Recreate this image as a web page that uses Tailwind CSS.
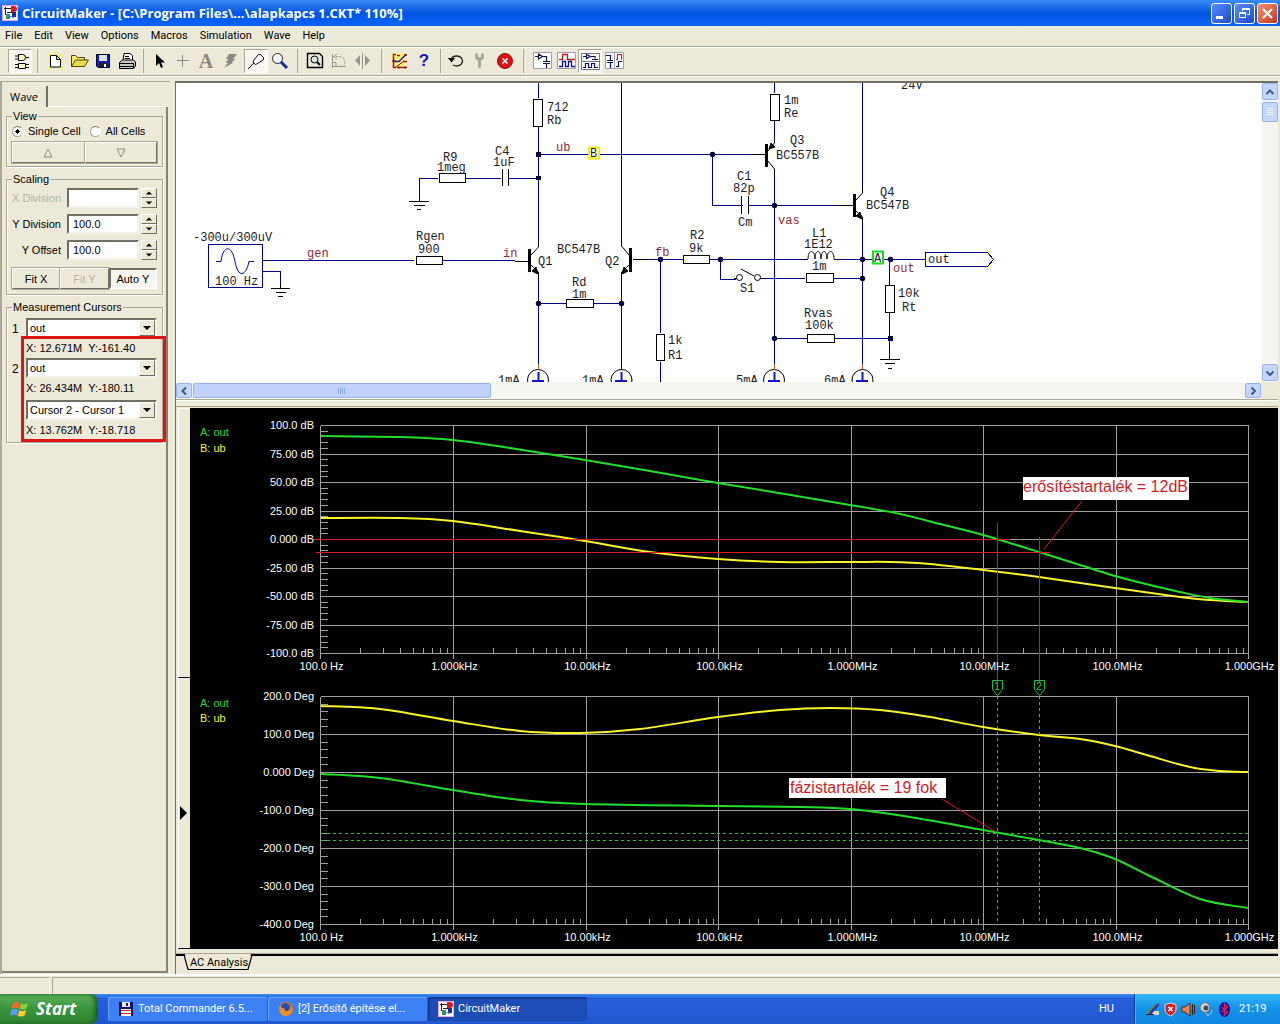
<!DOCTYPE html>
<html lang="hu">
<head>
<meta charset="utf-8">
<title>CircuitMaker - [C:\Program Files\...\alapkapcs 1.CKT* 110%]</title>
<script src="https://cdn.jsdelivr.net/npm/@tailwindcss/browser@4"></script>
</head>
<body class="flex min-h-screen flex-col overflow-x-hidden bg-[#ece9d8] font-['Liberation_Sans',Arial,sans-serif] text-[11px] leading-[14px] text-black">

<!-- shared symbols -->
<svg width="0" height="0" class="hidden">
  <symbol id="app" viewBox="0 0 16 16">
    <rect width="16" height="16" fill="#f3a6dc"/><rect x="1" y="1" width="14" height="14" fill="#fff"/>
    <path d="M2 3.500h8M3.500 2v8M5 7.500h6" stroke="#222" fill="none"/>
    <path d="M9 1h3a3 3 0 0 1 0 6H9z" fill="#d81a28"/>
    <path d="M10 7h4v5h-4z" fill="#222c8c"/>
    <path d="M4 9h4v5H4z" fill="#2fa060"/><path d="M5 14c2-3 5-3 7-1" stroke="#3858c8" fill="none"/>
  </symbol>
</svg>

<header class="flex h-[26px] items-center bg-linear-to-b from-[#3a8cf8] via-[#0454e2] to-[#0a64fa] pr-0.5 pl-0.5">
  <svg class="size-4 shrink-0"><use href="#app"/></svg>
  <h1 class="ml-1 flex-1 truncate font-['Open_Sans','Noto_Sans',sans-serif] text-[13px] leading-5 font-bold text-white">CircuitMaker - [C:\Program Files\...\alapkapcs 1.CKT* 110%]</h1>
  <div class="flex gap-0.5">
    <button aria-label="Minimize" class="size-[21px] rounded-[3px] border border-white bg-linear-to-br from-[#5b8cf4] to-[#1a48d0]"><svg viewBox="0 0 19 19"><path d="M4 12h7v3H4z" fill="#fff"/></svg></button>
    <button aria-label="Restore" class="size-[21px] rounded-[3px] border border-white bg-linear-to-br from-[#5b8cf4] to-[#1a48d0]"><svg viewBox="0 0 19 19" fill="none" stroke="#fff"><path d="M7.500 7V4.500h7v6H12M7 5.500h8M4.500 8.500h6v5h-6zM4 9.500h7"/></svg></button>
    <button aria-label="Close" class="size-[21px] rounded-[3px] border border-white bg-linear-to-br from-[#f09070] to-[#c83010]"><svg viewBox="0 0 19 19"><path d="M5 5l9 9M14 5l-9 9" stroke="#fff" stroke-width="2.200"/></svg></button>
  </div>
</header>

<nav class="flex h-5 items-center gap-3 pl-[5px] font-['Roboto',sans-serif] text-[11px]">
  <a href="#">File</a><a href="#">Edit</a><a href="#">View</a><a href="#">Options</a><a href="#">Macros</a><a href="#">Simulation</a><a href="#">Wave</a><a href="#">Help</a>
</nav>

<div class="flex h-[30px] items-center border-y border-[#aca899] pl-2 shadow-[inset_0_1px_0_#fff,0_1px_0_#fff]">
  <button aria-label="Parts" class="size-6 border border-[#aca899] border-r-white border-b-white bg-[#f6f5ee]"><svg viewBox="1 1 22 22" fill="#ffffb4" stroke="#000"><path d="M10.500 5.500h4a3 3 0 0 1 0 6h-4zM7 7h3M7 10h3M18 8.500h3"/><path d="M10.500 14.500h7v5h-7zM7 15.500h3M7 18.500h3M18 15.500h3M18 18.500h3"/></svg></button>
  <span class="mx-[5px] h-6 w-px bg-[#aca899]"></span>
  <button aria-label="New" class="size-6"><svg viewBox="0 0 24 24"><path d="M5 5l3 2M19 5l-3 3M4 12h4M20 12h-3M5 20l3-2M20 20l-3-3M12 3v3" stroke="#f4f430" stroke-width="2"/><path d="M7.500 6.500h6l4 4v7.500h-10zM13.500 6.500v4h4" fill="#fff" stroke="#000"/></svg></button>
  <button aria-label="Open" class="size-6"><svg viewBox="0 0 24 24" stroke="#4c4a00"><path d="M4.500 17.500v-11h4l2 2h7v3" fill="#f4ec60"/><path d="M4.500 17.500l4-6.500h13l-4 6.500z" fill="#e8dc50"/></svg></button>
  <button aria-label="Save" class="size-6"><svg viewBox="0 0 24 24"><path d="M5.500 5.500h13v13H7l-1.500-1.500z" fill="#1420b0" stroke="#000040"/><path d="M8 6h8v6H8z" fill="#d8e4f4"/><path d="M8 14h8v4H8z" fill="#222"/><path d="M13 15h2v3h-2z" fill="#fff"/></svg></button>
  <button aria-label="Print" class="size-6"><svg viewBox="0 0 24 24" stroke="#000"><path d="M8 11.500l1-7h6l2.500 2v5" fill="#fff"/><path d="M10 7.500h4M10 9.500h5"/><path d="M4.500 13.500l3-2.500h11l2 2v4l-2 2.500h-14z" fill="#c8c8c0"/><path d="M5 14.500h13M5 17.500h13M18.500 14v5"/></svg></button>
  <span class="mx-1 h-6 w-px bg-[#aca899]"></span>
  <button aria-label="Select" class="size-6"><svg viewBox="0 0 24 24"><path d="M8 5v12l3-3 2 5 2-1-2-4.500h4z"/></svg></button>
  <button aria-label="Wire" class="size-6"><svg viewBox="0 0 24 24"><path d="M5 11.500h12M10.500 6v12" stroke="#908e84"/></svg></button>
  <button aria-label="Text" class="size-6 pr-1 font-['Liberation_Serif',serif] text-xl leading-6 font-bold text-[#8c8a80]">A</button>
  <button aria-label="Delete" class="size-6"><svg viewBox="0 0 24 24"><path d="M9 5h8l-4 5h2.500l-4 3.500h2L4 19l4-5.500H5.500L8.500 10H6z" fill="#8c8a80"/></svg></button>
  <button aria-label="Probe" class="size-6 border border-[#aca899] border-r-white border-b-white bg-[#f6f5ee]"><svg viewBox="1 1 22 22" fill="#fff" stroke="#000"><path d="M4 20l6-6"/><path d="M9.500 11.500l5-6 2 0 3 3v2l-6 4-2 1-2.500-2z"/></svg></button>
  <button aria-label="Zoom" class="size-6"><svg viewBox="0 0 24 24"><circle cx="9.500" cy="9.500" r="5" fill="#f4f8ff" stroke="#222"/><path d="M13 13l6 6" stroke="#1828b0" stroke-width="3"/></svg></button>
  <span class="mx-[5px] h-6 w-px bg-[#aca899]"></span>
  <button aria-label="Fit" class="size-6"><svg viewBox="0 0 24 24" fill="none" stroke="#000"><path d="M4.500 4.500h12l3 3v11h-15z" stroke-width="1.400"/><circle cx="11.500" cy="10.500" r="3.500" fill="#cfe8e8"/><path d="M14 13l3 3" stroke-width="2"/></svg></button>
  <button aria-label="Rotate" class="size-6"><svg viewBox="0 0 24 24" fill="none" stroke="#98968c"><path d="M5.500 5v14M5 17.500h14" /><path d="M6 7.500h6a6 6 0 0 1 5 9" stroke-dasharray="2 1"/><path d="M10 5l-3 2.500 3 2.500M5 13.500h4v4"/></svg></button>
  <button aria-label="Mirror" class="size-6"><svg viewBox="0 0 24 24" fill="#98968c"><path d="M9 6v11l-5-5.500zM14 6v11l5-5.500z"/><path d="M11 4h1v16h-1z"/></svg></button>
  <span class="mx-1.5 h-6 w-px bg-[#aca899]"></span>
  <button aria-label="Run" class="size-6"><svg viewBox="0 0 24 24" fill="none"><path d="M4 4h14v15H5z" fill="#fff27a"/><path d="M8 5.500H5.500v13H8M4 12h4M9 6.500h3M15 12.500h4M9 18.500h10" stroke="#a01818" stroke-width="1.500"/><path d="M6 12.500h5l7-7" stroke="#2020a0" stroke-width="1.500"/><path d="M8 18l8-6M16.500 5.500h2v1h-2zM10.500 18h1v1h-1zM16.500 18h1v1h-1z" stroke="#801010"/></svg></button>
  <button aria-label="Help" class="size-6 text-[17px] leading-6 font-bold text-[#1414c0]">?</button>
  <span class="mx-1 h-6 w-px bg-[#aca899]"></span>
  <button aria-label="Reset" class="size-6"><svg viewBox="0 0 24 24"><path d="M6 10a6 5 0 1 1 2 6" fill="none" stroke="#222" stroke-width="1.400"/><path d="M3 9h7l-3.500 4.500z"/></svg></button>
  <button aria-label="Tools" class="size-6"><svg viewBox="0 0 24 24"><path d="M6 5v4l3 3v6l1.500 1.500L12 18v-6l3-3V5l-3-1v4h-3V4z" fill="#aaa89c"/></svg></button>
  <button aria-label="Stop" class="size-6"><svg viewBox="0 0 24 24"><circle cx="12" cy="12" r="7.500" fill="#e01010" stroke="#901010"/><path d="M9.500 9.500l5 5M14.500 9.500l-5 5" stroke="#fff" stroke-width="1.600"/></svg></button>
  <span class="mx-1.5 h-6 w-px bg-[#aca899]"></span>
  <button aria-label="Schematic" class="size-6"><svg viewBox="0 0 24 24" fill="none" stroke="#101040"><path d="M3.500 3.500h18v16h-18z" fill="#fff" stroke="#98a0b0"/><path d="M5 7.500h3M8.500 5l4 2.500-4 2.500zM13 7.500h3.500v5M13 12.500h7M13 14.500h7M16.500 15v4" stroke-width="1.200"/></svg></button>
  <button aria-label="Waveforms" class="size-6"><svg viewBox="0 0 24 24" fill="none"><path d="M3.500 3.500h18v16h-18z" fill="#fff" stroke="#98a0b0"/><path d="M5 10.500h3.500v-5h5v5H21" stroke="#c01818" stroke-width="1.300"/><path d="M5 17.500h3.500v-5h3v5h3v-5h3v5H21" stroke="#101090" stroke-width="1.300"/></svg></button>
  <button aria-label="Split horizontally" class="size-6 border border-[#aca899] border-r-white border-b-white bg-[#f6f5ee]"><svg viewBox="1 1 22 22" fill="none" stroke="#101060"><path d="M3.500 4.500h18v16h-18z" fill="#fff" stroke="#707880"/><path d="M3 12.500h18" stroke="#707880"/><path d="M5 7.500h3M8.500 5.500l4 2-4 2zM13 7.500h4v2M14 10.500h6M5 18.500h2.500v-4h3v4h3v-4h3v4H20" stroke-width="1.200"/></svg></button>
  <button aria-label="Split vertically" class="size-6"><svg viewBox="0 0 24 24" fill="none" stroke="#101060"><path d="M3.500 3.500h18v16h-18z" fill="#fff" stroke="#98a0b0"/><path d="M12.500 3v17" stroke="#98a0b0"/><path d="M4 6.500h4.500v5M5 11.500h6M5 13.500h6M8.500 14v5M14 17.500h2.500v-5H20" stroke-width="1.200"/><path d="M14 10.500h1.500v-5h4v5" stroke="#c01818" stroke-width="1.200"/></svg></button>
</div>

<main class="flex flex-1 items-stretch pt-[5px]">
  <!-- side panel -->
  <aside class="w-[170px] shrink-0 border-t border-l-2 border-[#aca899] pt-1 pb-px">
    <div class="flex h-full flex-col">
      <div class="flex">
        <button class="h-[21px] w-[46px] border-r-2 border-r-[#716f64] font-['Open_Sans',sans-serif] text-[11px] leading-3">Wave</button>
        <span class="mr-0.5 flex-1 border-b border-white"></span>
      </div>
      <div class="mr-0.5 flex flex-1 flex-col gap-[5px] border-r-2 border-b-2 border-[#848278] pr-[3px] pl-1">
        <fieldset class="mt-0.5 h-[58px] border border-[#aca899] px-[5px] shadow-[inset_1px_0_0_#fff,1px_1px_0_#fff]">
          <legend class="px-px">View</legend>
          <div class="flex h-4 items-center gap-[5px]">
            <input id="r1" name="cells" type="radio" checked class="size-[11px] appearance-none rounded-full border border-[#aca899] border-t-[#716f64] border-r-white bg-white bg-radial from-black from-30% to-white to-35%"><label for="r1" class="mr-1">Single Cell</label>
            <input id="r2" name="cells" type="radio" class="size-[11px] appearance-none rounded-full border border-[#aca899] border-t-[#716f64] border-r-white bg-white"><label for="r2">All Cells</label>
          </div>
          <div class="mt-[3px] grid h-[21px] grid-cols-2">
            <button aria-label="Up" class="flex items-center justify-center border border-white border-r-[#716f64] border-b-[#716f64] outline outline-[#aca899]"><svg class="size-3" viewBox="0 0 12 12"><path d="M6 2l4 8H2z" fill="none" stroke="#8c8a80"/></svg></button>
            <button aria-label="Down" class="flex items-center justify-center border border-white border-r-[#716f64] border-b-[#716f64] outline outline-[#aca899]"><svg class="size-3" viewBox="0 0 12 12"><path d="M6 10l4-8H2z" fill="none" stroke="#8c8a80"/></svg></button>
          </div>
        </fieldset>
        <fieldset class="h-[123px] border border-[#aca899] px-[5px] shadow-[inset_1px_0_0_#fff,1px_1px_0_#fff]">
          <legend class="px-px">Scaling</legend>
          <div class="mt-0.5 grid grid-cols-[1fr_72px_16px] items-center gap-x-0.5 gap-y-1.5">
            <label for="xd" class="pr-1 text-right whitespace-nowrap text-[#b4b1a2]">X Division</label>
            <input id="xd" class="h-5 w-full border-2 border-[#716f64] border-r-[#f4f2e8] border-b-[#f4f2e8] bg-white px-1">
            <div class="spin grid h-5"></div>
            <label for="yd" class="pr-1 text-right whitespace-nowrap">Y Division</label>
            <input id="yd" value="100.0" class="h-5 w-full border-2 border-[#716f64] border-r-[#f4f2e8] border-b-[#f4f2e8] bg-white px-1">
            <div class="spin grid h-5"></div>
            <label for="yo" class="pr-1 text-right whitespace-nowrap">Y Offset</label>
            <input id="yo" value="100.0" class="h-5 w-full border-2 border-[#716f64] border-r-[#f4f2e8] border-b-[#f4f2e8] bg-white px-1">
            <div class="spin grid h-5"></div>
          </div>
          <div class="mt-2 grid h-[21px] grid-cols-3">
            <button class="border border-white border-r-[#716f64] border-b-[#716f64] outline outline-[#aca899]">Fit X</button>
            <button disabled class="border border-white border-r-[#716f64] border-b-[#716f64] text-[#b4b1a2] outline outline-[#aca899]">Fit Y</button>
            <button class="border-2 border-[#716f64] border-r-white border-b-white bg-[#f6f5ee] whitespace-nowrap">Auto Y</button>
          </div>
        </fieldset>
        <fieldset class="relative h-[143px] border border-[#aca899] px-[5px] shadow-[inset_1px_0_0_#fff,1px_1px_0_#fff]">
          <legend class="px-px">Measurement Cursors</legend>
          <div class="mt-1 grid grid-cols-[12px_1fr] gap-x-0.5">
            <label for="c1" class="pt-1 text-[12px]">1</label>
            <div class="pick grid h-5"><select id="c1" class="col-start-1 row-start-1 h-5 w-full appearance-none border-2 border-[#716f64] border-r-[#f4f2e8] border-b-[#f4f2e8] bg-white px-0.5"><option>out</option></select></div>
            <p class="col-start-2 h-5 pt-[3px] whitespace-pre">X: 12.671M  Y:-161.40</p>
            <label for="c2" class="pt-1 text-[12px]">2</label>
            <div class="pick grid h-5"><select id="c2" class="col-start-1 row-start-1 h-5 w-full appearance-none border-2 border-[#716f64] border-r-[#f4f2e8] border-b-[#f4f2e8] bg-white px-0.5"><option>out</option></select></div>
            <p class="col-start-2 h-[22px] pt-[3px] whitespace-pre">X: 26.434M  Y:-180.11</p>
            <div class="pick col-start-2 grid h-5"><select aria-label="Difference" class="col-start-1 row-start-1 h-5 w-full appearance-none border-2 border-[#716f64] border-r-[#f4f2e8] border-b-[#f4f2e8] bg-white px-0.5"><option>Cursor 2 - Cursor 1</option></select></div>
            <p class="col-start-2 h-5 pt-[3px] whitespace-pre">X: 13.762M  Y:-18.718</p>
          </div>
          <div class="pointer-events-none absolute top-5.5 -right-1 -bottom-0.5 left-3.5 border-3 border-[#e01414]"></div>
        </fieldset>
      </div>
    </div>
  </aside>

  <div class="ml-[5px] flex min-w-0 flex-1 flex-col border-l border-[#716f64] pr-0.5">
    <!-- schematic pane -->
    <section class="grid grid-cols-[1fr_17px] grid-rows-[299px_17px] border-t-2 border-[#716f64] bg-white">
      <svg class="h-[299px] w-full" id="schem" viewBox="176 83 1085 299" preserveAspectRatio="xMinYMin meet" font-family="'Liberation Mono','Courier New',monospace" font-size="12" fill="none" stroke="#00008c">
        <g shape-rendering="crispEdges">
          <!-- wires -->
          <path d="M538.500 83v15M538.500 127v114M538.500 275v95M621.500 83v161M621.500 275v95M538 154.500h215M712.500 154v51h30M749 205.500h103M774.500 83v10M774.500 121v20M774.500 170v200M862.500 83v110M862.500 222v148M419.500 201v-22.500h18M466 178.500h35M509 178.500h29M262 260.500h152M443 260.500h72M262 271.500h18v14M538 303.500h28M594 303.500h28M633 259.500h50M710 259.500h95M660.500 260v73M660.500 362v20M720.500 260v19h15M760 278.500h45M834 278.500h28M834 259.500h91M774 338.500h33M835 338.500h55M889.500 260v25M889.500 313v44"/>
          <path d="M208.500 244.500h54v43h-54zM925.500 252.500h62l6 7-6 7h-62z"/>
          <!-- component bodies -->
          <g stroke="#000" fill="#fff">
            <path d="M533.500 99.500h9v27h-9zM770.500 94.500h9v26h-9zM439.500 173.500h26v9h-26zM416.500 256.500h26v8h-26zM566.500 299.500h27v8h-27zM683.500 255.500h26v8h-26zM656.500 334.500h8v26h-8zM806.500 273.500h27v9h-27zM807.500 334.500h27v8h-27zM885.500 285.500h9v27h-9z"/>
            <path fill="none" d="M409 201.500h20M414 205.500h11M417 209.500h4M271 288.500h19M276 292.500h10M278 296.500h5M880 359.500h20M885 363.500h10M888 368.500h4M502.500 169v17M508.500 169v17M741.500 196v18M748.500 196v18M515 261.500h13M633 259.500h14M752 154.500h13M838 205.500h15M805 259.500h3M834 259.500h4M734 278.500h4M889.500 357v2M280.500 284v5"/>
          </g>
          <path d="M528 249h3v23h-3zM629 248h3v24h-3zM765 144h3v23h-3zM853 194h3v23h-3z" fill="#000" stroke="none"/>
        </g>
        <g stroke="#000">
          <path d="M531 255l7.500-8v-6M531 265l7.500 7v7M629 255l-7.500-9v-5M629 265l-7.500 7v7M768 151l6.500-8v-6M768 161l6.500 8v6M856 200l6.500-7v-5M856 211l6.500 6v7"/>
          <path d="M538 274l-6-3 4-4zM622 274l6-3-4-4zM769 149l6-2-4-4zM862 219l-6-3 4-4z" fill="#000"/>
          <path d="M808 259c0-10 7-10 7 0 0-10 6-10 6 0 0-10 6-10 6 0 0-10 7-10 7 0"/>
          <circle cx="739.500" cy="277.500" r="3" fill="#fff"/><circle cx="757.500" cy="277.500" r="3" fill="#fff"/><path d="M741 269l13 7"/>
          <circle cx="538" cy="380" r="10.500"/><circle cx="621.500" cy="380" r="10.500"/><circle cx="774" cy="380" r="10.500"/><circle cx="862.500" cy="380" r="10.500"/>
        </g>
        <path d="M216 261.500h5c2-17 11-17 14 0s11 15 14 0h5"/>
        <path d="M538.500 372v9M532 381h12M621.500 372v9M615 381h12M774.500 372v9M768 381h12M862.500 372v9M856 381h12" stroke="#1414d0" stroke-width="2"/>
        <path d="M538.500 364v6M774.500 364v6M862.500 364v6" stroke="#b06030"/>
        <g fill="#00003c" stroke="none">
          <path d="M536 152h5v5h-5zM536 176h5v4h-5zM888 336h5v5h-5z"/>
          <circle cx="538.500" cy="303.500" r="2.700"/><circle cx="621.500" cy="303.500" r="2.700"/><circle cx="712.500" cy="154.500" r="2.700"/><circle cx="774.500" cy="205.500" r="2.700"/><circle cx="660.500" cy="259.500" r="2.700"/><circle cx="720.500" cy="259.500" r="2.700"/><circle cx="774.500" cy="338.500" r="2.700"/><circle cx="862.500" cy="259.500" r="2.700"/><circle cx="862.500" cy="278.500" r="2.700"/><circle cx="890.500" cy="259.500" r="2.700"/>
        </g>
        <path d="M589 147.500h10v11h-10z" fill="#fff" stroke="#f4ec10" stroke-width="2"/>
        <path d="M873 251.500h10v12h-10z" fill="#fff" stroke="#10e020" stroke-width="2"/>
        <g fill="#1c1c24" stroke="none">
          <text x="547" y="111">712</text><text x="547" y="124">Rb</text><text x="590" y="157">B</text><text x="874" y="262">A</text>
          <text x="443" y="161">R9</text><text x="437" y="171">1meg</text><text x="495" y="155">C4</text><text x="493" y="166">1uF</text>
          <text x="193" y="241">-300u/300uV</text><text x="215" y="285">100 Hz</text>
          <text x="416" y="240">Rgen</text><text x="418" y="253">900</text><text x="538" y="265">Q1</text><text x="557" y="253">BC547B</text><text x="605" y="265">Q2</text>
          <text x="572" y="286">Rd</text><text x="572" y="298">1m</text><text x="690" y="239">R2</text><text x="689" y="252">9k</text>
          <text x="668" y="344">1k</text><text x="668" y="359">R1</text><text x="737" y="180">C1</text><text x="733" y="192">82p</text><text x="738" y="226">Cm</text>
          <text x="740" y="292">S1</text><text x="784" y="104">1m</text><text x="784" y="117">Re</text><text x="790" y="144">Q3</text><text x="776" y="159">BC557B</text>
          <text x="880" y="196">Q4</text><text x="866" y="209">BC547B</text><text x="812" y="237">L1</text><text x="804" y="248">1E12</text><text x="812" y="270">1m</text>
          <text x="804" y="317">Rvas</text><text x="805" y="329">100k</text><text x="898" y="297">10k</text><text x="902" y="311">Rt</text><text x="928" y="263">out</text>
          <text x="901" y="89">24V</text><text x="498" y="384">1mA</text><text x="582" y="384">1mA</text><text x="736" y="384">5mA</text><text x="824" y="384">6mA</text>
        </g>
        <g fill="#902838" stroke="none">
          <text x="556" y="151">ub</text><text x="307" y="257">gen</text><text x="503" y="257">in</text><text x="655" y="256">fb</text><text x="778" y="224">vas</text><text x="893" y="272">out</text>
        </g>
      </svg>
      <div class="flex flex-col bg-[#f6f5ef] pb-px pl-px">
        <button aria-label="Scroll up" class="h-[17px] rounded-xs border border-[#98b4ea] bg-[#c4d6fc]"><svg viewBox="0 0 14 14"><path d="M3.500 9L7 5.500 10.500 9" fill="none" stroke="#40588c" stroke-width="2"/></svg></button>
        <div class="mt-0.5 flex h-5 items-center justify-center rounded-xs border border-[#98b4ea] bg-[#c4d6fc]"><svg class="size-2" viewBox="0 0 8 8"><path d="M1 .5h6M1 2.500h6M1 4.500h6M1 6.500h6" stroke="#eef4fe"/></svg></div>
        <span class="flex-1"></span>
        <button aria-label="Scroll down" class="h-[17px] rounded-xs border border-[#98b4ea] bg-[#c4d6fc]"><svg viewBox="0 0 14 14"><path d="M3.500 5.500L7 9l3.500-3.500" fill="none" stroke="#40588c" stroke-width="2"/></svg></button>
      </div>
      <div class="flex bg-[#f6f5ef] py-px">
        <button aria-label="Scroll left" class="w-4 rounded-xs border border-[#98b4ea] bg-[#c4d6fc]"><svg viewBox="0 0 14 14"><path d="M9 3.500L5.500 7 9 10.500" fill="none" stroke="#40588c" stroke-width="2"/></svg></button>
        <div class="ml-px flex w-[298px] items-center justify-center rounded-xs border border-[#98b4ea] bg-[#c0d2fc]"><svg class="size-2" viewBox="0 0 8 8"><path d="M.5 1v6M2.500 1v6M4.500 1v6M6.500 1v6" stroke="#8ca8e0"/></svg></div>
        <span class="flex-1"></span>
        <button aria-label="Scroll right" class="w-4 rounded-xs border border-[#98b4ea] bg-[#c4d6fc]"><svg viewBox="0 0 14 14"><path d="M5.500 3.500L9 7l-3.500 3.500" fill="none" stroke="#40588c" stroke-width="2"/></svg></button>
      </div>
      <div class="bg-[#ece9d8]"></div>
    </section>
    <div class="h-[9px] border-t border-[#aca899] bg-[#ece9d8] pt-1.5 shadow-[inset_0_1px_0_#fff]"><div class="border-t border-[#aca899]"></div></div>

    <!-- waveform pane -->
    <section class="flex">
      <div class="flex w-3.5 shrink-0 flex-col pl-0.5">
        <div class="h-[270px] border-t border-l border-white border-b border-b-black"></div>
        <div class="flex flex-1 items-center border-b border-l border-b-black border-l-white"><svg class="h-4 w-2.5" viewBox="0 0 10 16"><path d="M1 1v14l7-7z"/></svg></div>
      </div>
      <svg class="h-[541px] w-full min-w-0 bg-black" viewBox="190 408 1088 541" preserveAspectRatio="xMinYMin meet" font-family="'Liberation Sans',Arial,sans-serif" font-size="11" fill="none">
        <path id="grid" stroke="#a0a0a0" shape-rendering="crispEdges"/>
        <g id="curves" stroke-width="2"></g>
        <g stroke="#18d428" stroke-dasharray="3 3" shape-rendering="crispEdges"><path d="M997.500 696v228M1039.500 696v228M321 833.500h927M321 840.500h927"/></g>
        <g stroke="#e01820"><path d="M313 539.500h697M316 552.500h734M997.500 523v164M1039.500 537v146" shape-rendering="crispEdges"/><path d="M1082 501l-38 48M942 799l54 33"/></g>
        <path d="M992.500 680.500h10v9l-5 6-5-6zM1034.500 680.500h10v9l-5 6-5-6z" stroke="#28c038"/>
        <g fill="#28c038"><text x="994" y="690">1</text><text x="1036" y="690">2</text></g>
        <path d="M1023 477h166v23h-166zM789 778h157v20h-157z" fill="#fff"/>
        <g fill="#d01c24" font-size="16"><text x="1023" y="492">erősítéstartalék = 12dB</text><text x="790" y="793">fázistartalék = 19 fok</text></g>
        <g id="labels" fill="#fff"></g>
        <g fill="#28d838"><text x="200" y="436">A: out</text><text x="200" y="707">A: out</text></g>
        <g fill="#f4f430"><text x="200" y="452">B: ub</text><text x="200" y="722">B: ub</text></g>
      </svg>
    </section>
    <div class="mt-1 h-5 border-t border-[#aca899]">
      <div class="flex border-t-2 border-black pl-2">
        <button class="-mt-0.5 grid h-[17px] w-[70px] place-items-center font-['Roboto',sans-serif]">
          <svg class="col-start-1 row-start-1 h-[17px] w-[70px]" viewBox="0 0 70 17"><path d="M1 0l4 15.500h57L67 0z" fill="#ece9d8"/><path d="M0 1l4 14.500h60L68 1h2" fill="none" stroke="#000" stroke-width="1.200"/></svg>
          <span class="col-start-1 row-start-1 whitespace-nowrap">AC Analysis</span>
        </button>
      </div>
    </div>
  </div>
</main>

<div class="flex h-5 border-t-2 border-white pt-px">
  <div class="w-[50px] border-t border-r border-t-[#aca899] border-r-white"></div>
  <div class="ml-0.5 flex-1 border-t border-l border-[#aca899]"></div>
</div>

<footer class="flex h-[30px] items-center bg-linear-to-b from-[#3f8cf0] from-0% via-[#2560dc] via-15% to-[#2058d0] font-['Roboto',sans-serif] text-[11px] text-white">
  <button class="mr-2.5 flex h-[30px] w-[98px] items-center gap-1.5 rounded-r-lg bg-linear-to-b from-[#5cae5c] via-[#38953a] to-[#2f8230] pl-2.5 font-['Open_Sans','Noto_Sans',sans-serif] text-[17px] leading-5 font-bold italic shadow-[inset_-3px_0_4px_#1c5c1c]">
    <svg class="size-5" viewBox="0 0 20 20"><path d="M3 4c3-2 5-1 7 0L8.500 9.500c-2-1-4-1-7 0z" fill="#f06830"/><path d="M11 4.500c2 1 4 1 7-.5L16.500 9.500c-3 1.500-5 1-7 .5z" fill="#8cd040"/><path d="M1.200 11c3-2 5-1 7 0L6.700 16.500c-2-1-4-1-7 0z" fill="#5c98f4"/><path d="M9.200 11.500c2 1 4 1 7-.5l-1.500 5.500c-3 1.500-5 1-7 .5z" fill="#f8d030"/></svg>
    Start
  </button>
  <div class="flex gap-px">
    <button class="flex h-6 w-[159px] items-center gap-1 rounded-xs bg-[#3c80f4] px-2.5 shadow-[inset_1px_1px_1px_#6ca4fa]"><svg class="size-4" viewBox="0 0 16 16"><path d="M1 1h14v14H1z" fill="#101060"/><path d="M4 1h8v5H4z" fill="#e8e8f4"/><path d="M8 2h2v3H8z" fill="#101060"/><path d="M3 8h10v7H3z" fill="#fff"/><path d="M3 9h10v1H3zM3 12h10v1H3z" fill="#d02020"/></svg><span class="truncate">Total Commander 6.5...</span></button>
    <button class="flex h-6 w-[159px] items-center gap-1 rounded-xs bg-[#3c80f4] px-2.5 shadow-[inset_1px_1px_1px_#6ca4fa]"><svg class="size-4" viewBox="0 0 16 16"><circle cx="8" cy="8" r="7" fill="#e87018"/><circle cx="7.500" cy="6.500" r="4.500" fill="#2850a8"/><path d="M2 4c1 3 2 3 4 3 1 2 0 3 3 3 2 0 4-2 3-6 3 3 3 10-4 11C2 15 0 9 2 4z" fill="#f09020"/></svg><span class="truncate">[2] Erősítő építése el...</span></button>
    <button class="flex h-6 w-[159px] items-center gap-1 rounded-xs bg-[#1c4cb4] px-2.5 shadow-[inset_1px_1px_2px_#103080]"><svg class="size-4"><use href="#app"/></svg><span class="truncate">CircuitMaker</span></button>
  </div>
  <span class="flex-1"></span>
  <span class="mr-5">HU</span>
  <div class="flex h-[30px] w-[146px] items-center gap-[3px] border-l border-[#103c98] bg-linear-to-b from-[#30b8f8] via-[#1490e8] to-[#1088e0] pl-2.5 shadow-[inset_1px_0_0_#30c0ff]">
    <svg class="size-[15px]" viewBox="0 0 15 15"><path d="M1 13l3-4h10v4z" fill="#d8d4c0"/><path d="M2 12l8-9" stroke="#20b040" stroke-width="2"/><path d="M4 12l8-9" stroke="#d02828" stroke-width="2"/><path d="M5 12l9-10" stroke="#2030d0" stroke-width="2"/><path d="M1 12.500h8" stroke="#222"/></svg>
    <svg class="size-[15px]" viewBox="0 0 15 15"><path d="M7.500 1L13 2.500v5c0 3-2.500 5-5.500 6.500C4.500 12.500 2 10.500 2 7.500v-5z" fill="#d02028" stroke="#e8d8d8"/><path d="M5.500 5l4 4M9.500 5l-4 4" stroke="#fff" stroke-width="1.600"/></svg>
    <svg class="size-[15px]" viewBox="0 0 15 15"><path d="M1 5h3l5-4v13l-5-4H1z" fill="#e88850" stroke="#5c2c10"/><path d="M11.500 2v11M13.500 3v9" stroke="#282020"/></svg>
    <svg class="size-[15px]" viewBox="0 0 15 15"><circle cx="6" cy="5.500" r="5" fill="#c8ccd0" stroke="#686c74"/><circle cx="7" cy="6" r="2.500" fill="#484c54"/><path d="M9 13c2 0 4-2 4-5M7 11l2 3" stroke="#a8c8e8" fill="none"/></svg>
    <svg class="size-[15px]" viewBox="0 0 15 15"><ellipse cx="7.500" cy="7.500" rx="5.500" ry="7.500" fill="#1414a8"/><path d="M4.500 5l6 5-3 3V2l3 3-6 5" fill="none" stroke="#e02040" stroke-width="1.400"/></svg>
    <time class="ml-1">21:19</time>
  </div>
</footer>

<script>
  // spin buttons and combo arrows
  document.querySelectorAll('.spin').forEach(s => s.innerHTML =
    ['M8 3l4 4H4z', 'M8 7l4-4H4z'].map((d, i) => `<button aria-label="${i ? 'Decrease' : 'Increase'}" class="border border-white border-r-[#716f64] border-b-[#716f64]"><svg class="h-2 w-full" viewBox="0 0 16 10"><path d="${d}"/></svg></button>`).join(''));
  document.querySelectorAll('.pick').forEach(p => p.insertAdjacentHTML('beforeend',
    '<span class="pointer-events-none col-start-1 row-start-1 m-0.5 flex w-4 items-center justify-center justify-self-end border border-white border-r-[#716f64] border-b-[#716f64] bg-[#ece9d8]"><svg class="size-2" viewBox="0 0 8 8"><path d="M0 2h8L4 6z"/></svg></span>'));

  // grid, ticks and axis labels of the two plots
  const L = 320.5, R = 1248.5, decade = (R - L) / 7;
  const freq = ['100.0 Hz', '1.000kHz', '10.00kHz', '100.0kHz', '1.000MHz', '10.00MHz', '100.0MHz', '1.000GHz'];
  const plots = [
    { top: 425.5, bottom: 653.5, y: ['100.0 dB', '75.00 dB', '50.00 dB', '25.00 dB', '0.000 dB', '-25.00 dB', '-50.00 dB', '-75.00 dB', '-100.0 dB'] },
    { top: 696.5, bottom: 924.5, y: ['200.0 Deg', '100.0 Deg', '0.000 Deg', '-100.0 Deg', '-200.0 Deg', '-300.0 Deg', '-400.0 Deg'] }
  ];
  let d = '', t = '';
  for (const p of plots) {
    const n = p.y.length - 1, step = (p.bottom - p.top) / n;
    p.y.forEach((label, i) => {
      const y = p.top + i * step;
      d += `M${L} ${y}H${R}`;
      t += `<text x="314" y="${y + 3.500}" text-anchor="end">${label}</text>`;
      if (i < n) for (let k = 1; k < 5; k++) d += `M${L} ${y + k * step / 5}h7`;
    });
    freq.forEach((label, i) => {
      const x = Math.floor(L + .4 + i * decade) + .5;
      d += `M${x} ${p.top}V${p.bottom + 5}`;
      t += `<text x="${x + 1}" y="${p.bottom + 16.500}" text-anchor="middle">${label}</text>`;
      if (i < 7) for (let k = 2; k < 10; k++) d += `M${x + decade * Math.log10(k)} ${p.bottom}v-6`;
    });
  }
  document.getElementById('grid').setAttribute('d', d);
  document.getElementById('labels').innerHTML = t;

  // measured curves, smoothed through their sample points
  const curves = [
    ['#20e028', [321,436, 400,437, 453,440, 510,448, 585,460, 650,471, 718,483, 785,494, 850,505, 900,514, 940,524, 983,535, 1039,552, 1080,565, 1115,576, 1150,585, 1180,592, 1210,598, 1248,602]],
    ['#f8f428', [321,518, 400,518, 453,521, 520,531, 585,541, 650,552, 718,559, 780,562, 850,562, 890,562, 930,564, 983,570, 1039,577, 1115,588, 1180,597, 1210,600, 1248,602]],
    ['#f8f428', [321,706, 380,709, 453,721, 520,731, 580,733, 640,729, 718,717, 780,710, 830,708, 880,710, 930,717, 983,727, 1039,735, 1080,739, 1115,746, 1150,756, 1190,767, 1220,771, 1248,772]],
    ['#20e028', [321,774, 380,778, 453,790, 520,800, 585,804, 718,806, 800,807, 850,809, 910,817, 983,830, 1039,840, 1080,848, 1115,859, 1150,876, 1200,899, 1248,908]]
  ];
  document.getElementById('curves').innerHTML = curves.map(([color, v]) => {
    const P = [];
    for (let i = 0; i < v.length; i += 2) P.push([v[i], v[i + 1]]);
    let s = `M${P[0]}`;
    for (let i = 0; i < P.length - 1; i++) {
      const a = P[i - 1] || P[i], b = P[i], c = P[i + 1], e = P[i + 2] || c;
      s += `C${b[0] + (c[0] - a[0]) / 6} ${b[1] + (c[1] - a[1]) / 6} ${c[0] - (e[0] - b[0]) / 6} ${c[1] - (e[1] - b[1]) / 6} ${c}`;
    }
    return `<path d="${s}" stroke="${color}"/>`;
  }).reverse().join('');
</script>
</body>
</html>
